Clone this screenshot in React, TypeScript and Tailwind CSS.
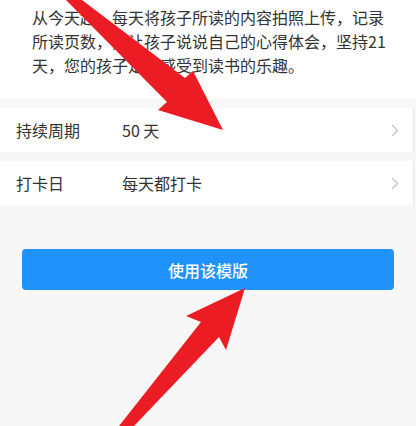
import React from "react";

function Chevron() {
  return (
    <svg width="8" height="13" viewBox="0 0 8 13" fill="none" className="shrink-0">
      <path d="M1.5 1.5 L6.5 6.5 L1.5 11.5" stroke="#c4c4c4" strokeWidth="1.3" strokeLinecap="round" strokeLinejoin="round" />
    </svg>
  );
}

function Row({ label, value }: { label: string; value: string }) {
  return (
    <div className="flex h-[44px] items-center bg-white pl-4 pr-[14px] mr-[2px] border-r border-[#e6e6e6]">
      <span className="w-[106px] text-[16px] text-[#333]">{label}</span>
      <span className="flex-1 text-[16px] text-[#333]">{value}</span>
      <Chevron />
    </div>
  );
}

export default function App() {
  return (
    <div
      className="relative h-[426px] w-full overflow-hidden bg-[#f7f7f7]"
      style={{ fontFamily: '"Noto Sans CJK SC", "Noto Sans", sans-serif' }}
    >
      <div className="bg-white pl-8 pr-4 pt-[5px] pb-[22px]">
        <p className="whitespace-nowrap text-[16px] leading-[24px] text-[#333]">
          从今天起，每天将孩子所读的内容拍照上传，记录
          <br />
          所读页数，并让孩子说说自己的心得体会，坚持21
          <br />
          天，您的孩子定能感受到读书的乐趣。
        </p>
      </div>
      <div className="mt-[9px] flex flex-col gap-[9px]">
        <Row label="持续周期" value="50 天" />
        <Row label="打卡日" value="每天都打卡" />
      </div>
      <div className="mt-[44px] px-[22px]">
        <button className="flex h-[41px] w-full items-center justify-center rounded-[4px] bg-[#2092fb] text-[16px] font-medium text-white">
          使用该模版
        </button>
      </div>
      <svg
        className="pointer-events-none absolute left-0 top-0"
        width="416"
        height="426"
        viewBox="0 0 416 426"
      >
        <polygon
          points="66,0 82,0 185,78 193,71 223,130 158,110 167,102"
          fill="#ec1c24"
        />
        <polygon
          points="119,426 201,322 186,316 245,288 226,350 219,337 134,426"
          fill="#ec1c24"
        />
      </svg>
    </div>
  );
}
